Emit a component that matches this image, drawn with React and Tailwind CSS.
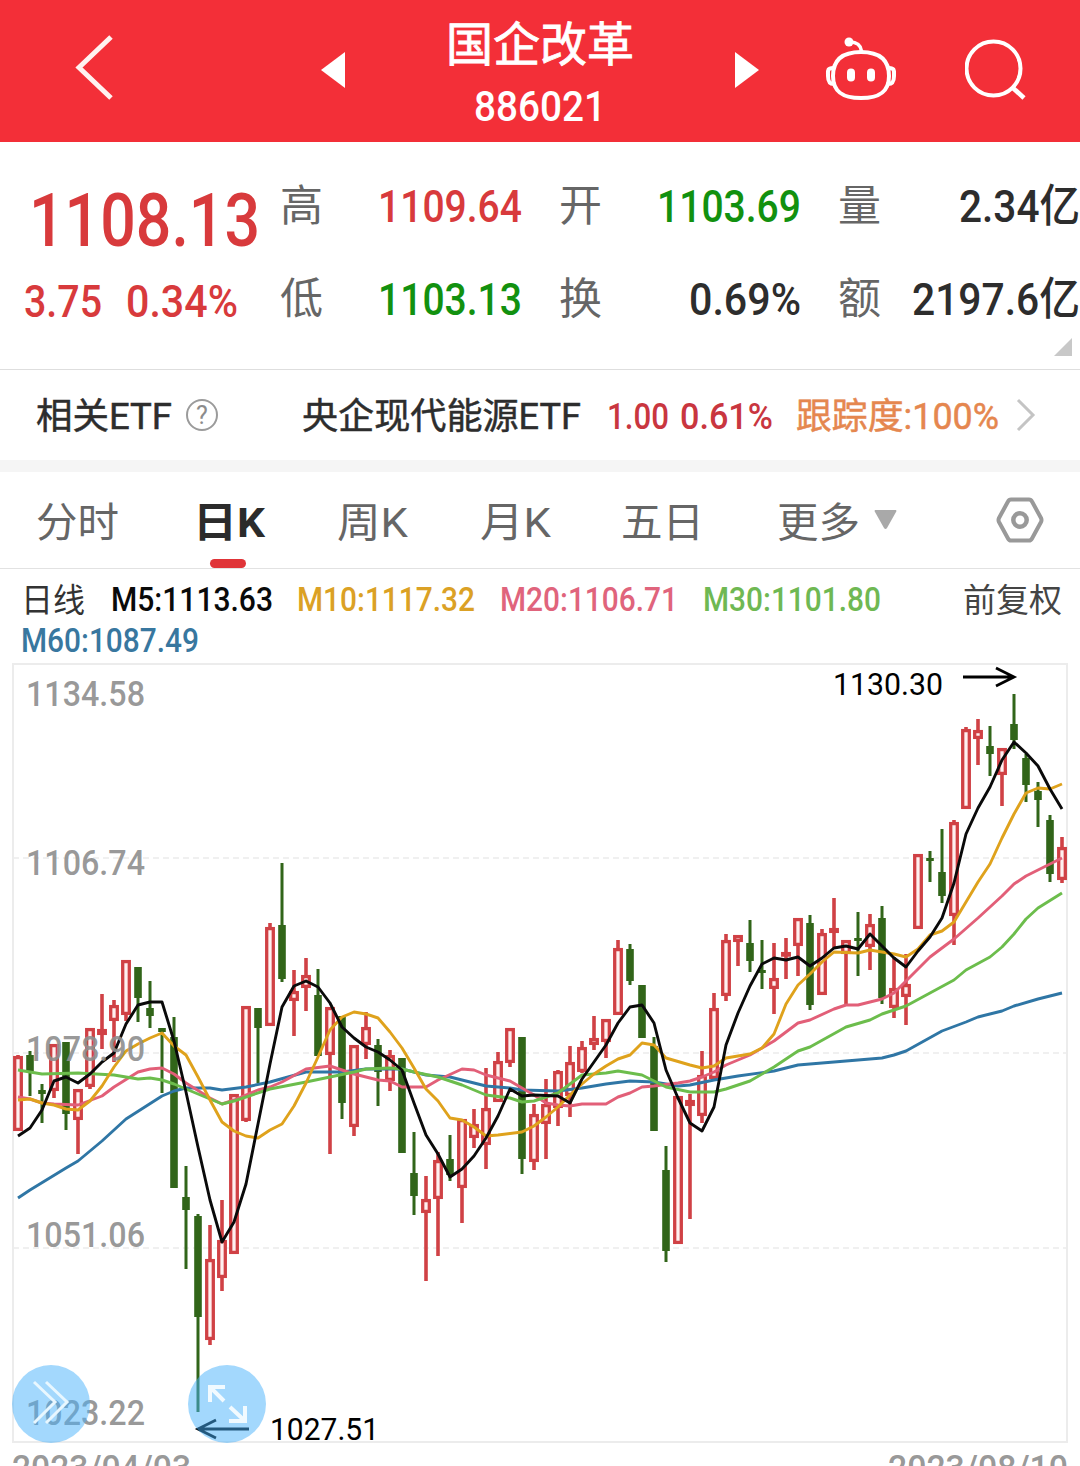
import { useLayoutEffect, useRef } from "react";

/* Text squeezed or stretched horizontally so that it fills a given width. */
function Fit({ w, className = "", children }) {
  const ref = useRef(null);
  useLayoutEffect(() => {
    const el = ref.current;
    el.style.transform = "none";
    const natural = el.getBoundingClientRect().width;
    el.style.transform = `scaleX(${w / natural})`;
  }, [w]);
  return (
    <span className={"block shrink-0 " + className} style={{ width: w }}>
      <span ref={ref} className="inline-block origin-left whitespace-pre align-top">
        {children}
      </span>
    </span>
  );
}

const RED = "text-[#d83a3c]";
const GREEN = "text-[#12910f]";
const DARK = "text-[#2d2d2d]";

const QUOTES = [
  { label: "高", value: "1109.64", w: 144, color: RED },
  { label: "开", value: "1103.69", w: 144, color: GREEN },
  { label: "量", value: "2.34亿", w: 121, color: DARK },
  { label: "低", value: "1103.13", w: 144, color: GREEN },
  { label: "换", value: "0.69%", w: 112, color: DARK },
  { label: "额", value: "2197.6亿", w: 168, color: DARK },
];

/* [up, high, bodyTop, bodyBottom, low] */
const CANDLES = [
  [1, 1055, 1056, 1131, 1131], [0, 1051, 1055, 1071, 1096], [0, 1084, 1090, 1094, 1123], [1, 1044, 1044, 1091, 1098],
  [0, 1042, 1042, 1114, 1130], [1, 1089, 1089, 1120, 1154], [1, 1028, 1028, 1087, 1089], [1, 994, 1029, 1035, 1049],
  [1, 1000, 1005, 1021, 1062], [1, 960, 960, 1015, 1021], [0, 967, 967, 998, 1022], [0, 981, 1008, 1016, 1028],
  [0, 1028, 1028, 1032, 1093], [0, 1017, 1037, 1188, 1188], [0, 1166, 1197, 1210, 1269], [0, 1214, 1216, 1317, 1412],
  [1, 1225, 1259, 1340, 1345], [1, 1200, 1240, 1278, 1291], [1, 1094, 1094, 1254, 1254], [1, 1006, 1006, 1121, 1122],
  [0, 1008, 1008, 1028, 1083], [1, 923, 927, 1026, 1026], [0, 863, 925, 979, 982], [1, 970, 991, 1001, 1036],
  [1, 958, 975, 988, 1011], [0, 969, 995, 1056, 1056], [1, 1007, 1007, 1055, 1154], [0, 1016, 1016, 1103, 1119],
  [1, 1045, 1045, 1127, 1136], [1, 1012, 1027, 1045, 1059], [0, 1039, 1045, 1072, 1106], [1, 1050, 1055, 1081, 1091],
  [0, 1058, 1058, 1153, 1153], [0, 1132, 1173, 1196, 1215], [1, 1176, 1199, 1213, 1281], [1, 1152, 1160, 1199, 1256],
  [0, 1135, 1159, 1175, 1181], [1, 1119, 1119, 1188, 1223], [1, 1109, 1124, 1138, 1148], [1, 1068, 1108, 1145, 1169],
  [1, 1052, 1061, 1102, 1102], [1, 1028, 1028, 1063, 1067], [0, 1037, 1037, 1159, 1174], [1, 1104, 1114, 1162, 1170],
  [1, 1079, 1104, 1124, 1159], [1, 1070, 1071, 1108, 1126], [1, 1046, 1062, 1096, 1117], [1, 1041, 1047, 1072, 1073],
  [1, 1016, 1038, 1045, 1050], [1, 1019, 1019, 1042, 1058], [1, 940, 948, 1015, 1015], [0, 944, 949, 981, 985],
  [0, 985, 985, 1038, 1038], [0, 1037, 1046, 1131, 1131], [0, 1146, 1170, 1251, 1262], [1, 1096, 1096, 1244, 1244],
  [1, 1094, 1100, 1106, 1219], [1, 1051, 1075, 1116, 1123], [1, 993, 1008, 1079, 1080], [1, 934, 940, 996, 1001],
  [1, 935, 935, 942, 966], [0, 920, 943, 961, 972], [0, 940, 970, 973, 989], [1, 943, 978, 989, 1014],
  [1, 938, 952, 956, 979], [1, 918, 918, 946, 976], [0, 915, 923, 1005, 1010], [1, 929, 933, 995, 995],
  [1, 898, 928, 933, 948], [1, 940, 940, 954, 1005], [0, 912, 938, 941, 976], [1, 914, 924, 947, 970],
  [0, 906, 918, 998, 1004], [1, 957, 988, 1008, 1018], [1, 954, 984, 997, 1025], [1, 854, 854, 929, 929],
  [0, 851, 858, 861, 882], [0, 829, 872, 896, 903], [1, 820, 822, 916, 945], [1, 727, 729, 809, 809],
  [1, 719, 730, 739, 765], [0, 726, 746, 754, 776], [1, 748, 748, 775, 806], [0, 694, 724, 740, 749],
  [0, 754, 758, 785, 802], [0, 782, 791, 800, 827], [0, 815, 820, 874, 882], [1, 837, 847, 880, 883],
];

const AVERAGES = [
  { color: "#2f76a5", points: "18,1198 30,1190 66,1168 78,1161 102,1141 126,1119 162,1096 174,1091 186,1088 210,1088 222,1090 246,1087 270,1082 306,1072 342,1072 366,1069 402,1069 414,1072 426,1075 450,1077 486,1086 510,1088 522,1090 558,1091 582,1088 606,1084 630,1081 654,1082 678,1086 690,1085 714,1080 738,1076 774,1071 798,1065 846,1061 882,1058 894,1055 906,1051 942,1031 966,1022 978,1017 1002,1011 1014,1006 1038,999 1062,993" },
  { color: "#e25f78", points: "18,1097 30,1099 42,1103 54,1104 78,1105 102,1096 114,1087 138,1072 150,1069 162,1068 174,1074 186,1083 210,1098 222,1104 234,1100 258,1090 270,1087 282,1082 306,1069 330,1066 354,1074 378,1080 390,1081 402,1087 426,1087 438,1080 462,1069 474,1070 486,1075 498,1078 510,1081 534,1095 546,1103 558,1105 570,1106 582,1104 606,1104 618,1097 630,1093 642,1087 654,1086 678,1083 690,1081 702,1077 714,1072 726,1065 738,1060 750,1055 774,1041 798,1023 810,1020 834,1009 846,1005 858,1005 882,999 894,993 906,981 930,957 954,939 978,918 1002,896 1014,884 1026,876 1062,858" },
  { color: "#6cbd4c", points: "18,1070 42,1074 78,1073 114,1075 138,1079 150,1078 162,1080 174,1084 198,1094 222,1104 234,1101 270,1089 306,1082 330,1077 354,1072 366,1069 390,1068 402,1069 414,1072 438,1077 462,1085 486,1095 510,1098 522,1102 534,1101 558,1093 582,1075 606,1073 618,1071 642,1075 654,1081 666,1087 690,1092 714,1092 726,1089 750,1081 774,1067 798,1051 810,1047 846,1027 870,1020 882,1014 906,1006 930,993 954,980 966,970 990,957 1002,947 1014,934 1026,919 1038,908 1062,893" },
  { color: "#dfa21c", points: "18,1100 30,1099 42,1103 54,1105 66,1109 78,1110 90,1101 102,1086 114,1067 126,1051 138,1044 150,1038 162,1033 174,1046 186,1055 198,1077 210,1100 222,1122 234,1131 246,1136 258,1138 270,1130 282,1124 294,1106 306,1083 318,1057 330,1030 342,1017 354,1012 366,1014 378,1018 390,1032 402,1048 414,1068 426,1089 438,1101 450,1118 462,1120 474,1127 486,1136 498,1135 522,1132 534,1126 546,1117 558,1107 570,1095 582,1084 594,1074 606,1066 618,1059 630,1055 642,1043 654,1045 666,1058 690,1065 702,1068 714,1066 726,1058 750,1054 762,1048 774,1034 786,1004 798,985 810,974 822,962 834,952 858,953 870,950 894,954 906,957 918,949 930,935 942,931 954,922 966,902 978,882 990,864 1002,838 1014,814 1026,793 1038,788 1050,789 1062,784" },
  { color: "#0a0a0a", points: "18,1136 30,1128 42,1110 54,1081 66,1077 78,1083 90,1074 102,1062 114,1053 126,1024 138,1005 150,1002 162,1002 174,1041 186,1092 198,1147 210,1200 222,1242 234,1222 246,1184 258,1124 270,1064 282,1007 294,986 306,981 318,987 330,1003 342,1027 354,1038 366,1047 378,1052 390,1060 402,1070 414,1103 426,1135 438,1154 450,1177 462,1169 474,1156 486,1138 498,1116 510,1089 522,1096 534,1095 558,1096 570,1103 582,1079 594,1062 606,1045 618,1023 630,1007 642,1005 654,1023 666,1070 678,1098 690,1123 702,1131 714,1107 726,1045 738,1013 750,986 762,964 774,958 786,960 798,957 810,966 822,958 834,948 846,946 858,949 870,934 882,946 894,958 906,967 918,951 930,937 942,918 954,883 966,834 978,808 990,787 1002,760 1014,742 1026,753 1038,766 1050,789 1062,809" },
];

const AXIS = [
  ["1134.58", 706], ["1106.74", 875], ["1078.90", 1061], ["1051.06", 1247], ["1023.22", 1425],
];

function Chart() {
  return (
    <svg viewBox="0 656 1080 810" className="block h-[810px] w-full" fontFamily="Roboto, sans-serif">
      <rect x="13" y="664" width="1054" height="778" fill="none" stroke="#ececec" strokeWidth="2" />
      {[858, 1053, 1248].map((y) => (
        <path key={y} d={`M13 ${y}H1067`} stroke="#ebebeb" strokeWidth="1.5" strokeDasharray="6 4" />
      ))}
      {CANDLES.map(([up, high, top, bottom, low], i) => {
        const x = 18 + i * 12;
        return up ? (
          <g key={i} stroke="#d04145" strokeWidth="3.6" fill="none">
            {top > high && <path d={`M${x} ${high}V${top + 1}`} />}
            {low > bottom && <path d={`M${x} ${bottom - 1}V${low}`} />}
            <rect x={x - 3.3} y={top + 1.6} width="6.6" height={Math.max(bottom - top - 3.2, 1.5)} strokeWidth="3.3" fill="#fff0f0" />
          </g>
        ) : (
          <g key={i} fill="#316519">
            <rect x={x - 1.5} y={high} width="3" height={low - high} />
            <rect x={x - 3.8} y={top} width="7.6" height={bottom - top} />
          </g>
        );
      })}
      {AVERAGES.map(({ color, points }) => (
        <polyline key={color} points={points} fill="none" stroke={color} strokeWidth="2.9" strokeLinejoin="round" />
      ))}
      <g fill="#8f8f8f" fillOpacity="0.92" fontSize="35" fontWeight="500">
        {AXIS.map(([t, y]) => (
          <text key={t} x="26" y={y} textLength="119" lengthAdjust="spacingAndGlyphs">{t}</text>
        ))}
        <text x="12" y="1480" textLength="179" lengthAdjust="spacingAndGlyphs">2023/04/03</text>
        <text x="888" y="1480" textLength="180" lengthAdjust="spacingAndGlyphs">2023/08/10</text>
      </g>
      <g fill="#000" fontSize="31">
        <text x="833" y="695" textLength="110" lengthAdjust="spacingAndGlyphs">1130.30</text>
        <text x="270" y="1440" textLength="109" lengthAdjust="spacingAndGlyphs">1027.51</text>
      </g>
      <g fill="none" stroke="#000" strokeWidth="2.8">
        <path d="M963 677H1013M996 668L1014 677L996 686" />
        <path d="M249 1429H199M216 1420L198 1429L216 1438" />
      </g>
    </svg>
  );
}

function Header() {
  return (
    <header className="flex h-[142px] items-start bg-[#f32f38] text-white">
      <svg className="ml-[74px] mt-[34px] h-[68px] w-[42px]" viewBox="0 0 42 68" fill="none" stroke="#fff2f0" strokeWidth="5">
        <path d="M37 3L5 33.500L37 64" />
      </svg>
      <svg className="ml-[205px] mt-[52px] h-[36px] w-[25px]" viewBox="0 0 25 36" fill="white">
        <path d="M0 18L24 0V36Z" />
      </svg>
      <div className="ml-[100px] flex w-[188px] flex-col items-center pt-[15px] font-medium">
        <Fit w={188} className="h-[60px] text-[47px] leading-[60px] font-normal [-webkit-text-stroke:0.8px_white]">国企改革</Fit>
        <Fit w={132} className="mt-[2px] h-[60px] text-[42px] leading-[60px]">886021</Fit>
      </div>
      <svg className="ml-[101px] mt-[52px] h-[36px] w-[25px]" viewBox="0 0 25 36" fill="white">
        <path d="M24 18L0 0V36Z" />
      </svg>
      <svg className="ml-[65px] mt-[36px] h-[66px] w-[72px]" viewBox="0 0 72 66" fill="none" stroke="white" strokeWidth="4" strokeLinecap="round">
        <path d="M36 16C55 16 64 24 64 40C64 56 54 62 36 62C18 62 8 56 8 40C8 24 17 16 36 16Z" />
        <path d="M36.500 15C35.500 8 31 6 25 6" strokeWidth="3.500" />
        <circle cx="24" cy="6" r="4.500" fill="white" stroke="none" />
        <path d="M8 32C2 32 3 35 3 40C3 45 4 48 9 48M64 32C70 32 69 35 69 40C69 45 68 48 63 48" />
        <path d="M26 36.500V41.500M46 36.500V41.500" strokeWidth="8" />
      </svg>
      <svg className="ml-[68px] mt-[38px] h-[64px] w-[64px]" viewBox="0 0 64 64" fill="none" stroke="white" strokeWidth="4">
        <circle cx="28.500" cy="30.500" r="27" />
        <path d="M48 50L59 60" strokeWidth="4.600" />
      </svg>
    </header>
  );
}

function Quote() {
  return (
    <section className="relative flex h-[228px] border-b border-[#dedede]">
      <div className={"w-[281px] shrink-0 font-medium " + RED}>
        <Fit w={231} className="ml-[29px] mt-[38px] h-[80px] text-[75px] leading-[80px]">1108.13</Fit>
        <div className="ml-[24px] mt-[17px] flex h-[50px] text-[45px] leading-[50px]">
          <Fit w={78}>3.75</Fit>
          <Fit w={112} className="ml-[24px]">0.34%</Fit>
        </div>
      </div>
      <div className="-ml-px grid shrink-0 grid-cols-[279px_279px_279px] grid-rows-[93px_93px] pt-[18px]">
        {QUOTES.map((q) => (
          <div key={q.label} className="flex w-[242px] items-center justify-between leading-[93px]">
            <Fit w={43} className="text-[43px] text-[#666]">{q.label}</Fit>
            <Fit w={q.w} className={"text-[45px] font-medium " + q.color}>{q.value}</Fit>
          </div>
        ))}
      </div>
      <svg className="absolute right-[8px] bottom-[13px] h-[18px] w-[18px]" viewBox="0 0 18 18" fill="#c8c8c8">
        <path d="M18 0V18H0Z" />
      </svg>
    </section>
  );
}

function RelatedEtf() {
  return (
    <section className="flex h-[90px] items-center text-[36px] leading-[94px] text-[#2d2d2d]">
      <Fit w={136} className="ml-[36px] pt-[3px] [-webkit-text-stroke:0.5px]">相关ETF</Fit>
      <span className="ml-[14px] flex h-[32px] w-[32px] items-center justify-center rounded-full border-2 border-[#9b9b9b] text-[25px] leading-none text-[#8c8c8c]">?</span>
      <Fit w={279} className="ml-[84px] pt-[3px] [-webkit-text-stroke:0.5px]">央企现代能源ETF</Fit>
      <Fit w={62} className="ml-[26px] pt-[3px] font-medium text-[#c9363f]">1.00</Fit>
      <Fit w={93} className="ml-[11px] pt-[3px] font-medium text-[#c9363f]">0.61%</Fit>
      <Fit w={203} className="ml-[23px] pt-[3px] text-[#e5874f] [-webkit-text-stroke:0.5px]">跟踪度:100%</Fit>
      <svg className="ml-[17px] h-[34px] w-[20px]" viewBox="0 0 20 34" fill="none" stroke="#c4c4c4" strokeWidth="3">
        <path d="M2 2L17 17L2 32" />
      </svg>
    </section>
  );
}

function Tabs() {
  return (
    <nav className="flex h-[97px] border-b border-[#e2e2e2] text-[41px] leading-[102px] text-[#666]">
      <Fit w={83} className="ml-[36px]">分时</Fit>
      <div className="relative ml-[74px] text-[#2b2b2b]">
        <Fit w={72} className="font-bold">日K</Fit>
        <span className="absolute bottom-0 left-[17px] h-[9px] w-[36px] rounded-full bg-[#e03438]" />
      </div>
      <Fit w={71} className="ml-[72px]">周K</Fit>
      <Fit w={71} className="ml-[72px]">月K</Fit>
      <Fit w={83} className="ml-[70px]">五日</Fit>
      <Fit w={83} className="ml-[73px]">更多</Fit>
      <svg className="ml-[14px] mt-[38px] h-[20px] w-[23px]" viewBox="0 0 23 20" fill="#a9a9a9">
        <path d="M1 0H22Q23 1 22 2L13 18Q11.500 20 10 18L1 2Q0 1 1 0Z" />
      </svg>
      <svg className="ml-[98px] mt-[24px] h-[48px] w-[50px]" viewBox="0 0 50 48" fill="none" stroke="#999" strokeWidth="4" strokeLinejoin="round">
        <path d="M16 3.500H34Q36 3.500 37 5.500L46 22Q47 24 46 26L37 42.500Q36 44.500 34 44.500H16Q14 44.500 13 42.500L4 26Q3 24 4 22L13 5.500Q14 3.500 16 3.500Z" />
        <circle cx="25" cy="24" r="6.700" strokeWidth="4.500" />
      </svg>
    </nav>
  );
}

function Legend() {
  return (
    <section className="h-[87px] pt-[10px] text-[33px] leading-[41px] font-medium">
      <div className="flex h-[41px]">
        <Fit w={64} className="ml-[21px] pt-px font-normal text-[#333]">日线</Fit>
        <Fit w={162} className="ml-[26px] text-[#0a0a0a]">M5:1113.63</Fit>
        <Fit w={178} className="ml-[24px] text-[#dba125]">M10:1117.32</Fit>
        <Fit w={178} className="ml-[25px] text-[#e0647c]">M20:1106.71</Fit>
        <Fit w={178} className="ml-[25px] text-[#6fb853]">M30:1101.80</Fit>
        <Fit w={99} className="ml-[82px] pt-px font-normal text-[#444]">前复权</Fit>
      </div>
      <Fit w={178} className="ml-[21px] text-[#38779f]">M60:1087.49</Fit>
    </section>
  );
}

export default function App() {
  return (
    <main className="h-[1466px] w-[1080px] overflow-hidden bg-white font-[Roboto,'Noto_Sans_CJK_SC',sans-serif]">
      <Header />
      <Quote />
      <RelatedEtf />
      <div className="h-[12px] bg-[#f5f5f5]" />
      <Tabs />
      <Legend />
      <div className="relative">
        <Chart />
        <button className="absolute left-[12px] top-[709px] h-[78px] w-[78px] rounded-full bg-[#47b1fb]/50">
          <svg viewBox="0 0 78 78" fill="none" stroke="#e8f7ff" strokeWidth="3">
            <path d="M22 17L43 37L22 58M34 17L55 37L34 58" />
          </svg>
        </button>
        <button className="absolute left-[188px] top-[709px] h-[78px] w-[78px] rounded-full bg-[#47b1fb]/50">
          <svg viewBox="0 0 78 78" fill="none" stroke="#f1faff" strokeWidth="4">
            <path d="M22 37V22H37M22 22L36 36M57 41V56H41M57 56L42 42" />
          </svg>
        </button>
      </div>
    </main>
  );
}
